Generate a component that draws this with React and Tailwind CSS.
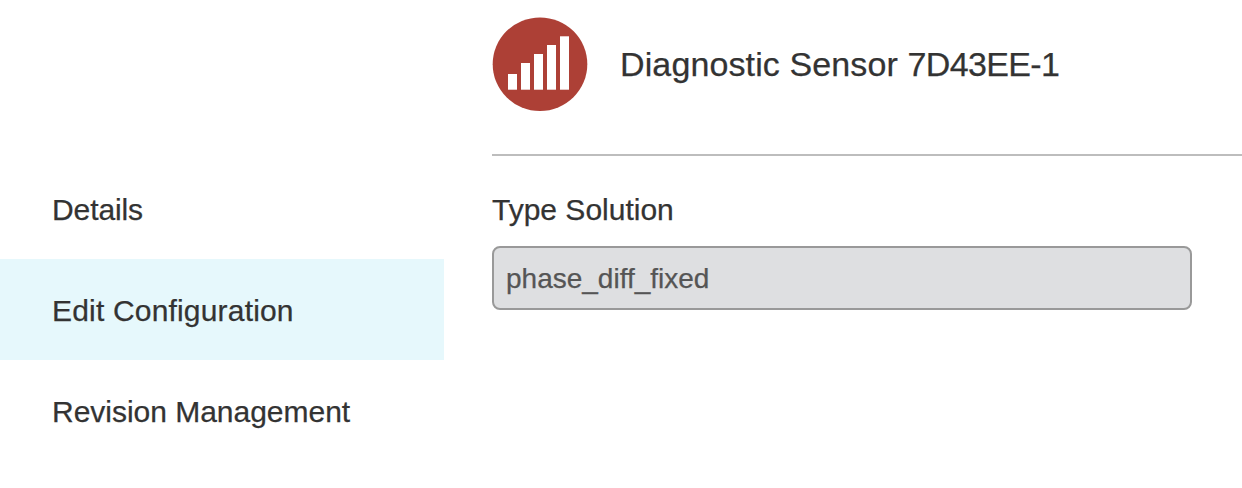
const navItems = [
  { label: "Details", tracking: "tracking-[-0.1px]" },
  { label: "Edit Configuration", tracking: "tracking-[0.18px]", active: true },
  { label: "Revision Management", tracking: "tracking-[-0.02px]" },
];

const SensorIcon = () => (
  <svg width="96" height="96" viewBox="0 0 96 96" className="shrink-0">
    <ellipse cx="48" cy="48.2" rx="47.3" ry="46.8" fill="#ad4036" />
    <g fill="#fff">
      <rect x="16" y="58" width="9" height="15.7" />
      <rect x="29" y="47" width="9" height="26.7" />
      <rect x="42" y="38" width="9" height="35.7" />
      <rect x="55" y="29" width="9" height="44.7" />
      <rect x="68" y="20.3" width="9" height="53.4" />
    </g>
  </svg>
);

const Sidebar = () => (
  <nav className="w-[444px] shrink-0 pt-[158px] text-[30px]">
    {navItems.map((item) => (
      <a
        key={item.label}
        className={`flex h-[101px] items-center pt-0.5 pl-[52px] ${item.tracking} ${
          item.active ? "bg-[#e6f8fc]" : ""
        }`}
      >
        {item.label}
      </a>
    ))}
  </nav>
);

export default function App() {
  return (
    <div className="flex h-[488px] overflow-hidden bg-white font-['Liberation_Sans',sans-serif] text-[#333] [-webkit-text-stroke:0.25px_currentColor]">
      <Sidebar />
      <main className="ml-12 flex-1">
        <header className="flex h-[156px] items-start border-b-2 border-[#bdbdbd] pt-4">
          <SensorIcon />
          <h1 className="ml-8 pt-7 text-[34px] leading-10 tracking-[0.12px] whitespace-nowrap">
            Diagnostic Sensor <span className="tracking-[-0.65px]">7D43EE-1</span>
          </h1>
        </header>
        <label className="block pt-[34px] text-[30px] leading-10">Type Solution</label>
        <input
          readOnly
          value="phase_diff_fixed"
          className="mt-4 block h-16 w-[700px] rounded-lg border-2 border-[#999] bg-[#dedfe1] px-3 pt-0.5 text-[28px] text-[#555] outline-none"
        />
      </main>
    </div>
  );
}
